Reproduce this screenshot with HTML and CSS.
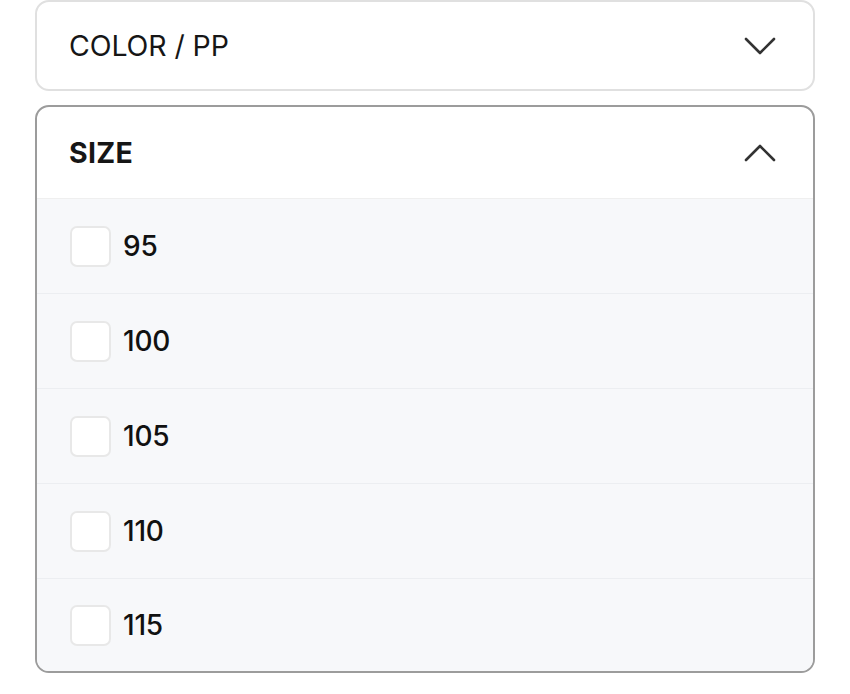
FILE: index.html
```html
<!DOCTYPE html>
<html>
<head>
<meta charset="utf-8">
<link rel="stylesheet" href="styles.css">
</head>
<body>
<div class="filters">
  <div class="acc acc-closed">
    <div class="acc-head">
      <span class="acc-title">COLOR / PP</span>
      <svg class="chev" width="32" height="18" viewBox="0 0 32 18"><path d="M2 2 L16 16 L30 2" fill="none" stroke="#333" stroke-width="2.6" stroke-linecap="round" stroke-linejoin="round"/></svg>
    </div>
  </div>
  <div class="acc acc-open">
    <div class="acc-head head-open">
      <span class="acc-title bold">SIZE</span>
      <svg class="chev" width="32" height="18" viewBox="0 0 32 18"><path d="M2 16 L16 2 L30 16" fill="none" stroke="#333" stroke-width="2.6" stroke-linecap="round" stroke-linejoin="round"/></svg>
    </div>
    <div class="opts">
      <label class="opt"><span class="box"></span><span class="val">95</span></label>
      <label class="opt"><span class="box"></span><span class="val">100</span></label>
      <label class="opt"><span class="box"></span><span class="val">105</span></label>
      <label class="opt"><span class="box"></span><span class="val">110</span></label>
      <label class="opt"><span class="box"></span><span class="val">115</span></label>
    </div>
  </div>
</div>
</body>
</html>
```
FILE: styles.css
```css
* { box-sizing: border-box; }
html, body { margin: 0; padding: 0; background: #fff; }
body { font-family: Inter, "Noto Sans", sans-serif; color: #111; }
.filters { padding: 0 35px; display: flex; flex-direction: column; gap: 14px; }
.acc { border-radius: 14px; overflow: hidden; background: #fff; }
.acc-closed { border: 2px solid #e0e0e0; height: 91px; }
.acc-open { border: 2px solid #9c9c9c; }
.acc-head { display: flex; align-items: center; justify-content: space-between; padding: 0 37px 0 32px; height: 87px; }
.head-open { height: 92px; border-bottom: 1px solid #efefef; }
.acc-title { font-size: 28.5px; font-weight: 400; letter-spacing: -0.1px; color: #161616; }
.acc-title.bold { font-weight: 700; letter-spacing: 0.3px; }
.opts { background: #f7f8fa; display: flex; flex-direction: column; }
.opt { display: flex; align-items: center; gap: 12px; height: 95px; padding: 0 33px; border-bottom: 1px solid #eceef1; }
.opt:last-child { height: 92px; border-bottom: none; }
.box { width: 41px; height: 41px; border: 2px solid #e8e8e8; border-radius: 7px; background: #fff; }
.val { font-size: 28px; font-weight: 500; color: #111; letter-spacing: -0.2px; }
```
